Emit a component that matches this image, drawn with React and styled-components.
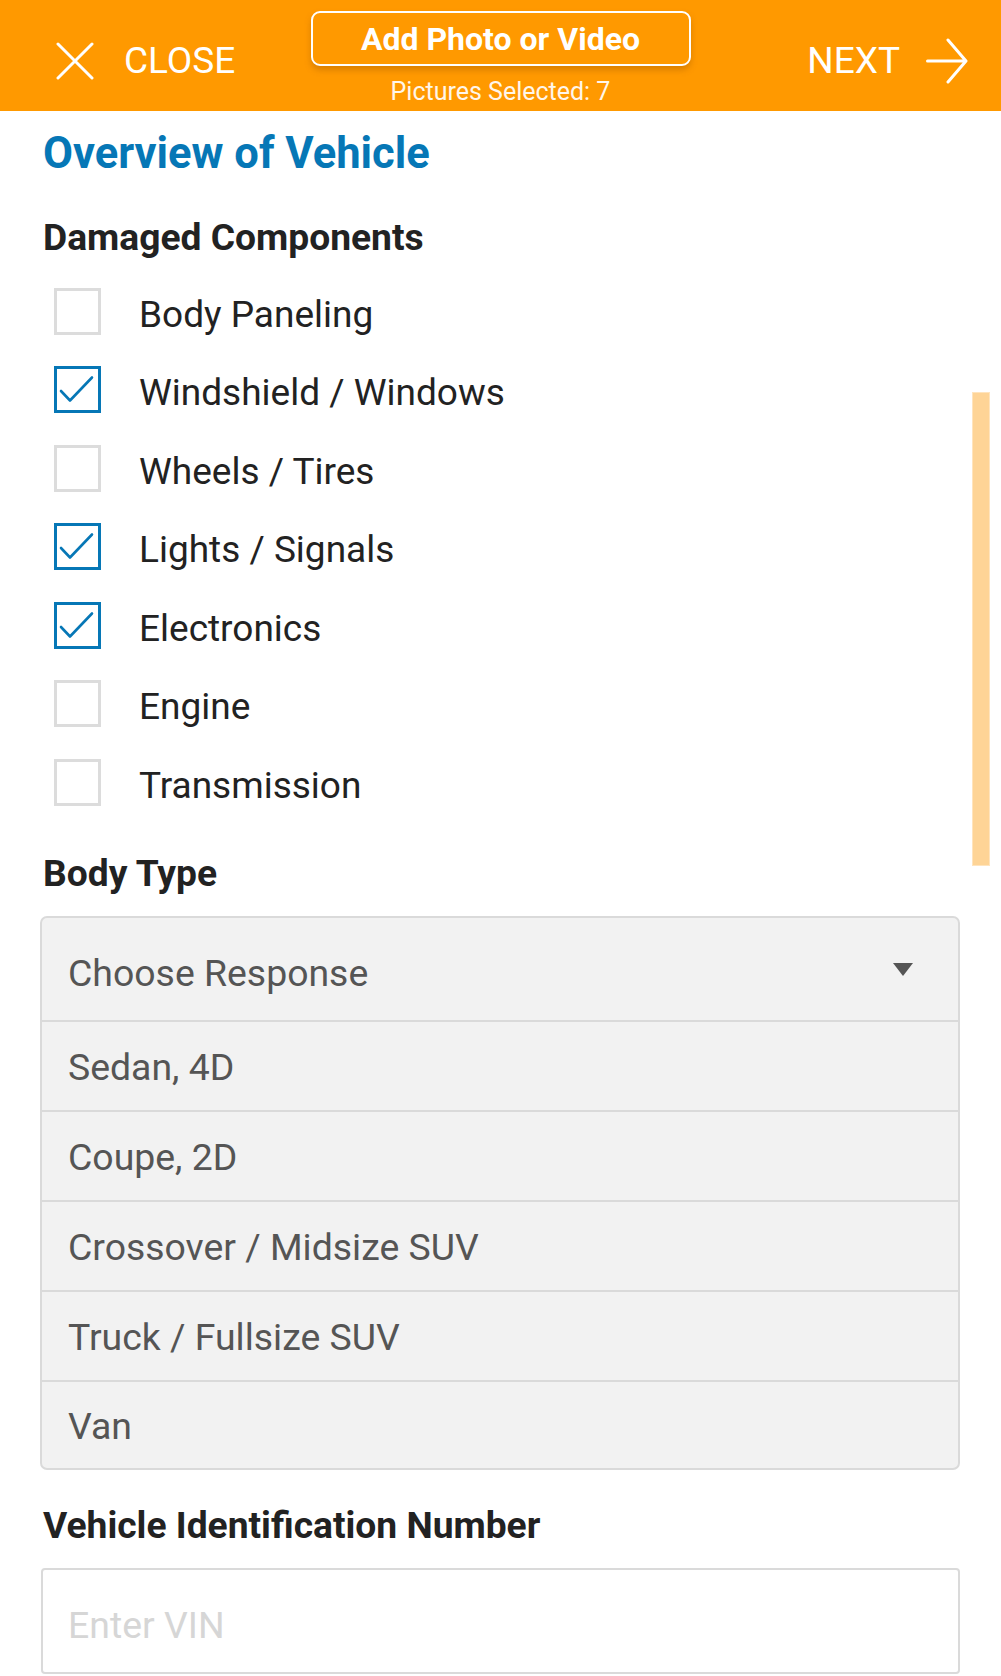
import React from "react";
import styled, { createGlobalStyle } from "styled-components";

const Global = createGlobalStyle`
  * { box-sizing: border-box; }
  html, body { margin: 0; padding: 0; background: #fff; }
  body { font-family: Roboto, "Noto Sans", "Liberation Sans", sans-serif; }
`;

const ORANGE = "#ff9900";
const BLUE = "#0677b6";

const Page = styled.div`
  position: relative;
  width: 1001px;
  min-height: 1676px;
  overflow: hidden;
`;

const Header = styled.header`
  height: 111px;
  background: ${ORANGE};
  display: grid;
  grid-template-columns: 1fr auto 1fr;
  color: #fff;
`;

const Side = styled.div`
  display: flex;
  align-items: center;
  justify-content: ${(p) => (p.$right ? "flex-end" : "flex-start")};
  gap: ${(p) => (p.$right ? "26px" : "30px")};
  padding: 10px ${(p) => (p.$right ? "33px" : "0")} 0 ${(p) => (p.$right ? "0" : "56px")};
`;

const SideLabel = styled.span`
  font-size: 37px;
  line-height: 1;
  font-weight: 400;
`;

const Center = styled.div`
  display: flex;
  flex-direction: column;
  align-items: center;
  padding-top: 11px;
`;

const AddButton = styled.button`
  width: 380px;
  height: 55px;
  background: ${ORANGE};
  border: 2.5px solid #fff;
  border-radius: 9px;
  box-shadow: 0 4px 6px rgba(150, 80, 0, 0.35);
  color: #fff;
  font-family: inherit;
  font-size: 32px;
  font-weight: 700;
  line-height: 1;
  padding: 0;
  display: flex;
  align-items: center;
  justify-content: center;
`;

const Caption = styled.div`
  margin-top: 13px;
  font-size: 25px;
  line-height: 1;
  color: #fff6ea;
`;

const Content = styled.main`
  padding: 0 41px 0 43px;
  display: flex;
  flex-direction: column;
`;

const Title = styled.h1`
  margin: 21px 0 0;
  font-size: 43.5px;
  line-height: 1;
  font-weight: 700;
  color: ${BLUE};
`;

const Heading = styled.h2`
  margin: ${(p) => p.$top}px 0 0;
  font-size: 37.2px;
  line-height: 1;
  font-weight: 700;
  color: #222;
`;

const CheckList = styled.div`
  margin-top: 16px;
  display: flex;
  flex-direction: column;
`;

const CheckRow = styled.label`
  height: 78.6px;
  display: flex;
  align-items: center;
  padding-left: 11px;
  gap: 38px;
`;

const Box = styled.span`
  width: 47px;
  height: 47px;
  flex: none;
  border: ${(p) => (p.$checked ? `3px solid ${BLUE}` : "3px solid #dcdcdc")};
  background: #fff;
  position: relative;
  display: block;
`;

const CheckSvg = styled.svg`
  position: absolute;
  left: -3px;
  top: -3px;
`;

const CheckText = styled.span`
  font-size: 37px;
  line-height: 1;
  color: #222;
  padding-top: 6px;
`;

const Select = styled.div`
  margin-top: 24px;
  margin-left: -3px;
  border: 2px solid #dadada;
  border-radius: 7px;
  background: #f2f2f2;
  display: flex;
  flex-direction: column;
  overflow: hidden;
`;

const Option = styled.div`
  height: ${(p) => p.$h}px;
  border-bottom: ${(p) => (p.$last ? "none" : "2px solid #dadada")};
  display: flex;
  align-items: center;
  justify-content: space-between;
  padding: ${(p) => (p.$head ? "10px" : "3px")} 45px 0 26px;
  font-size: 37.4px;
  line-height: 1;
  color: #555;
`;

const Caret = styled.span`
  width: 0;
  height: 0;
  border-left: 10px solid transparent;
  border-right: 10px solid transparent;
  border-top: 13px solid #555;
  margin-top: -10px;
`;

const Input = styled.input`
  margin-top: 24px;
  margin-left: -2px;
  height: 106px;
  border: 2px solid #dadada;
  border-radius: 4px;
  background: #fff;
  padding: 8px 0 0 25px;
  font-family: inherit;
  font-size: 37.4px;
  color: #333;
  outline: none;
  &::placeholder { color: #d6d6d6; }
`;

const ScrollThumb = styled.div`
  position: absolute;
  left: 972px;
  top: 392px;
  width: 18px;
  height: 474px;
  background: #fed496;
  border: 1px solid #ffe4bd;
`;

const items = [
  ["Body Paneling", false],
  ["Windshield / Windows", true],
  ["Wheels / Tires", false],
  ["Lights / Signals", true],
  ["Electronics", true],
  ["Engine", false],
  ["Transmission", false],
];

const options = ["Sedan, 4D", "Coupe, 2D", "Crossover / Midsize SUV", "Truck / Fullsize SUV", "Van"];

export default function App() {
  return (
    <Page>
      <Global />
      <Header>
        <Side>
          <svg width="38" height="38" viewBox="0 0 38 38">
            <path d="M2 2 L36 36 M36 2 L2 36" stroke="#fff" strokeWidth="3" strokeLinecap="round" fill="none" />
          </svg>
          <SideLabel>CLOSE</SideLabel>
        </Side>
        <Center>
          <AddButton>Add Photo or Video</AddButton>
          <Caption>Pictures Selected: 7</Caption>
        </Center>
        <Side $right>
          <SideLabel>NEXT</SideLabel>
          <svg width="42" height="46" viewBox="0 0 42 46">
            <path d="M1.5 23 H39.5 M22 2 L40 23 L22 44" stroke="#fff" strokeWidth="3" strokeLinecap="round" strokeLinejoin="round" fill="none" />
          </svg>
        </Side>
      </Header>
      <Content>
        <Title>Overview of Vehicle</Title>
        <Heading $top={43}>Damaged Components</Heading>
        <CheckList>
          {items.map(([label, checked]) => (
            <CheckRow key={label}>
              <Box $checked={checked}>
                {checked && (
                  <CheckSvg width="47" height="47" viewBox="0 0 47 47">
                    <path d="M7 25 L16 34.5 L38 11.5" stroke={BLUE} strokeWidth="2.6" fill="none" strokeLinecap="round" strokeLinejoin="round" />
                  </CheckSvg>
                )}
              </Box>
              <CheckText>{label}</CheckText>
            </CheckRow>
          ))}
        </CheckList>
        <Heading $top={33}>Body Type</Heading>
        <Select>
          <Option $head $h={104}>
            <span>Choose Response</span>
            <Caret />
          </Option>
          {options.map((o, i) => (
            <Option key={o} $h={i === options.length - 1 ? 86 : 90} $last={i === options.length - 1}>
              <span>{o}</span>
            </Option>
          ))}
        </Select>
        <Heading $top={37}>Vehicle Identification Number</Heading>
        <Input placeholder="Enter VIN" />
      </Content>
      <ScrollThumb />
    </Page>
  );
}
